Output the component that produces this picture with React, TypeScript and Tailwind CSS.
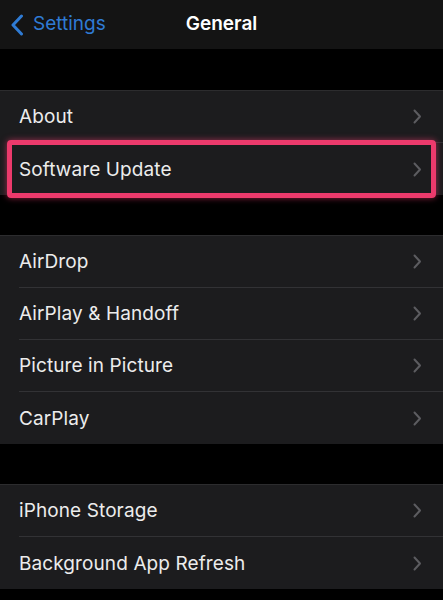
const GROUPS: string[][] = [
  ['About', 'Software Update'],
  ['AirDrop', 'AirPlay & Handoff', 'Picture in Picture', 'CarPlay'],
  ['iPhone Storage', 'Background App Refresh'],
];

function Chevron() {
  return (
    <svg width="9" height="15" viewBox="0 0 9 15" className="shrink-0">
      <path d="M1.5 1.5 L7 7.5 L1.5 13.5" fill="none" stroke="#5c5c60" strokeWidth="2" strokeLinecap="round" strokeLinejoin="round" />
    </svg>
  );
}

function Row({ label, last, highlight }: { label: string; last: boolean; highlight?: boolean }) {
  return (
    <div className="relative h-[52px] pl-[19px] flex items-center">
      <div className={`flex-1 h-full flex items-center pr-[21px] ${last ? '' : 'border-b border-[#323235]'}`}>
        <span className="flex-1 text-[19px] text-[#ececec] tracking-[0.1px] pt-[2px]">{label}</span>
        <Chevron />
      </div>
      {highlight && (
        <div className="absolute left-[7px] right-[7px] top-[-3px] bottom-[-3px] border-[5px] border-[#ec3a6c] rounded-[4px] shadow-[0_0_6px_rgba(236,58,108,0.6)]" />
      )}
    </div>
  );
}

export default function App() {
  return (
    <div className="w-[443px] h-[600px] bg-black overflow-hidden" style={{ fontFamily: 'Inter, "Noto Sans", sans-serif' }}>
      <div className="h-[49px] bg-[#141414] relative flex items-center justify-center">
        <div className="absolute left-[10px] top-0 h-full flex items-center gap-[9px]">
          <svg width="14" height="22" viewBox="0 0 14 22">
            <path d="M11.5 2 L3 11 L11.5 20" fill="none" stroke="#2f7bd4" strokeWidth="3" strokeLinecap="round" strokeLinejoin="round" />
          </svg>
          <span className="text-[19px] text-[#2f7bd4]">Settings</span>
        </div>
        <span className="text-[19px] font-semibold text-white">General</span>
      </div>
      <div className="flex flex-col gap-[40px] pt-[41px]">
        {GROUPS.map((g, gi) => (
          <div key={gi} className="bg-[#1c1c1e] border-t border-[#2c2c2e]">
            {g.map((label, i) => (
              <Row key={label} label={label} last={i === g.length - 1} highlight={label === 'Software Update'} />
            ))}
          </div>
        ))}
      </div>
    </div>
  );
}
